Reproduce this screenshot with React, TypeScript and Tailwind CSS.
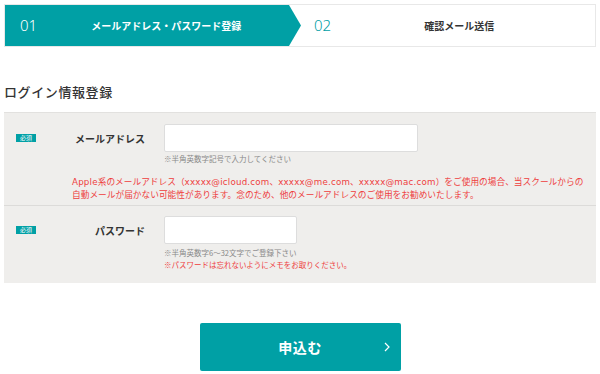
import React from 'react';

const TEAL = 'bg-[#00a0a5]';

const Badge = () => (
  <span className="inline-flex items-center justify-center w-[20px] h-[8px] bg-[#00a0a5] text-white text-[6px] leading-none">
    必須
  </span>
);

const App: React.FC = () => {
  return (
    <div className="w-[600px] h-[374px] bg-white overflow-hidden font-['Noto_Sans_CJK_JP','Noto_Sans',sans-serif] text-[#333]">
      <div className="mx-[4px]">
        {/* steps */}
        <div className="mt-[4px] h-[43px] border border-[#e8e8e8] flex">
          <div className="flex h-full">
            <div className={`w-[284px] ${TEAL} flex items-center`}>
              <span className="pl-[15px] text-[15px] font-light text-white font-['Noto_Sans',sans-serif]">01</span>
              <span className="ml-[54px] text-[10px] font-bold text-white">メールアドレス・パスワード登録</span>
            </div>
            <svg width="12" height="41" viewBox="0 0 12 41" className="block">
              <polygon points="0,0 12,20.5 0,41" fill="#00a0a5" />
            </svg>
          </div>
          <div className="flex-1 flex items-center">
            <span className="ml-[13px] text-[15px] font-light text-[#00a0a5] font-['Noto_Sans',sans-serif]">02</span>
            <span className="ml-[93px] text-[10px] font-bold text-[#333]">確認メール送信</span>
          </div>
        </div>

        <h2 className="mt-[35px] text-[13px] leading-[19px] font-medium tracking-[0.6px] text-[#333]">
          ログイン情報登録
        </h2>

        {/* form */}
        <div className="mt-[11px] bg-[#efeeec] border-t border-[#e2e1df]">
          <div className="border-b border-[#dcdbd9] pt-[11px] pb-[3px]">
            <div className="flex">
              <div className="w-[160px] h-[28px] flex items-center pl-[12px] pr-[19px]">
                <Badge />
                <span className="ml-auto text-[10px] font-bold">メールアドレス</span>
              </div>
              <div>
                <div className="w-[254px] h-[28px] bg-white border border-[#dddddd] rounded-[2px]" />
                <p className="mt-[1px] text-[7.5px] leading-[12px] text-[#888]">※半角英数字記号で入力してください</p>
              </div>
            </div>
            <p className="mt-[11px] ml-[68px] text-[8.7px] leading-[13px] text-[#ee3d3d] whitespace-nowrap font-['DejaVu_Sans','Noto_Sans_CJK_JP',sans-serif]">
              <span className="tracking-[0.2px]">Apple</span>系のメールアドレス（
              <span className="tracking-[0.2px]">xxxxx@icloud.com</span>、
              <span className="tracking-[0.2px]">xxxxx@me.com</span>、
              <span className="tracking-[0.2px]">xxxxx@mac.com</span>）をご使用の場合、当スクールからの
              <br />
              自動メールが届かない可能性があります。念のため、他のメールアドレスのご使用をお勧めいたします。
            </p>
          </div>

          <div className="pt-[10px] pb-[12px]">
            <div className="flex">
              <div className="w-[160px] h-[28px] flex items-center pl-[12px] pr-[19px]">
                <Badge />
                <span className="ml-auto text-[10px] font-bold">パスワード</span>
              </div>
              <div>
                <div className="w-[133px] h-[28px] bg-white border border-[#dddddd] rounded-[2px]" />
                <p className="mt-[3px] text-[7.5px] leading-[12px] text-[#888]">※半角英数字6～32文字でご登録下さい</p>
                <p className="text-[7.5px] leading-[12px] text-[#ee3d3d]">※パスワードは忘れないようにメモをお取りください。</p>
              </div>
            </div>
          </div>
        </div>

        {/* submit */}
        <div className="mt-[40px] flex justify-center">
          <button className={`relative w-[201px] h-[48px] ${TEAL} rounded-[2px] flex items-center justify-center`}>
            <span className="text-[14px] font-bold text-white tracking-[0.5px]">申込む</span>
            <svg
              width="6"
              height="10"
              viewBox="0 0 6 10"
              className="absolute right-[11px] top-1/2 -translate-y-1/2"
            >
              <polyline points="1,1 5,5 1,9" fill="none" stroke="white" strokeWidth="1.2" />
            </svg>
          </button>
        </div>
      </div>
    </div>
  );
};

export default App;
